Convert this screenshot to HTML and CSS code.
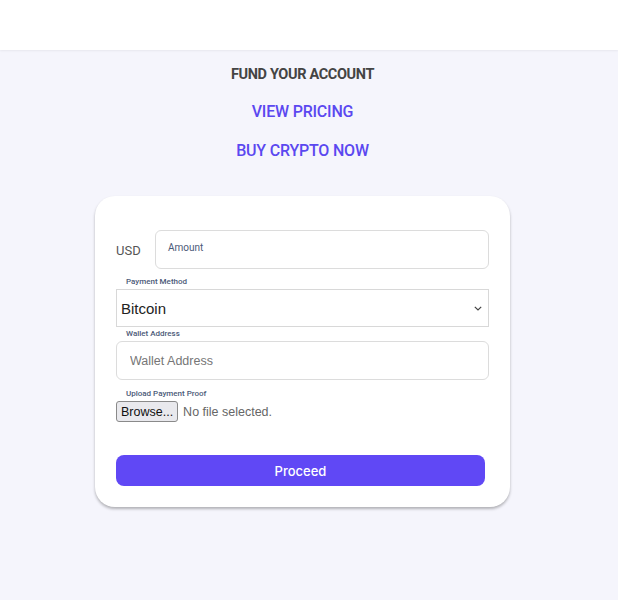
FILE: index.html
```html
<!DOCTYPE html>
<html>
<head>
<meta charset="utf-8">
<link rel="stylesheet" href="styles.css">
</head>
<body>
<header class="topbar"></header>
<main class="page">
  <h1 class="title">FUND YOUR ACCOUNT</h1>
  <a class="link link-first" href="#">VIEW PRICING</a>
  <a class="link" href="#">BUY CRYPTO NOW</a>
  <form class="card">
    <div class="amount-row">
      <span class="currency">USD</span>
      <div class="float-field">
        <input class="field amount-input" type="text">
        <label class="float-label">Amount</label>
      </div>
    </div>
    <label class="small-label pay-label">Payment Method</label>
    <div class="select-wrap">
      <select class="select">
        <option>Bitcoin</option>
      </select>
      <svg class="chevron" width="8" height="5" viewBox="0 0 8 5"><path d="M0.8 0.8l3.2 3.2 3.2-3.2" fill="none" stroke="#444" stroke-width="1.2"/></svg>
    </div>
    <label class="small-label wallet-label">Wallet Address</label>
    <input class="field wallet-input" type="text" placeholder="Wallet Address">
    <label class="small-label upload-label">Upload Payment Proof</label>
    <div class="file-row">
      <button type="button" class="browse">Browse...</button>
      <span class="no-file">No file selected.</span>
    </div>
    <button type="button" class="proceed">Proceed</button>
  </form>
</main>
</body>
</html>
```
FILE: styles.css
```css
html, body {
  margin: 0;
  padding: 0;
}
body {
  background: #f5f5fc;
  font-family: Roboto, "Liberation Sans", sans-serif;
  width: 618px;
  height: 600px;
  overflow: hidden;
}
.topbar {
  height: 50px;
  background: #fff;
  box-shadow: 0 1px 2px rgba(0, 0, 0, 0.06);
}
.page {
  width: 605px;
  display: flex;
  flex-direction: column;
  align-items: center;
}
.title {
  margin: 15px 0 0;
  font-size: 14.5px;
  line-height: 20px;
  font-weight: 700;
  color: #444;
  letter-spacing: -0.35px;
}
.link {
  display: block;
  font-size: 16px;
  line-height: 24px;
  font-weight: 500;
  color: #5b48f0;
  text-decoration: none;
  margin-top: 15px;
  letter-spacing: -0.2px;
}
.link-first {
  margin-top: 15px;
}
.card {
  margin-top: 33px;
  width: 415px;
  box-sizing: border-box;
  padding: 34px 21px 21px;
  background: #fff;
  border-radius: 20px;
  box-shadow: 0 2px 3px rgba(0, 0, 0, 0.28);
  display: flex;
  flex-direction: column;
}
.amount-row {
  display: flex;
  align-items: center;
}
.currency {
  width: 39px;
  font-size: 13px;
  color: #555;
  padding-top: 1px;
}
.float-field {
  position: relative;
  flex: 1;
}
.field {
  display: block;
  width: 100%;
  box-sizing: border-box;
  height: 39px;
  border: 1px solid #dcdcdc;
  border-radius: 6px;
  background: #fff;
  font-family: "Liberation Sans", sans-serif;
  font-size: 12.5px;
  padding: 0 13px;
  outline: none;
}
.float-label {
  position: absolute;
  left: 13px;
  top: 12px;
  font-size: 10px;
  color: #4b5a78;
}
.small-label {
  display: block;
  font-size: 8px;
  line-height: 10px;
  font-weight: 500;
  color: #4b5a78;
  padding-left: 10px;
  margin-bottom: 2px;
}
.pay-label {
  margin-top: 8px;
}
.wallet-label {
  margin-top: 2px;
}
.upload-label {
  margin-top: 9px;
}
.select-wrap {
  position: relative;
}
.select {
  display: block;
  width: 100%;
  height: 38px;
  box-sizing: border-box;
  appearance: none;
  -webkit-appearance: none;
  border: 1px solid #d8d8d8;
  border-radius: 0;
  background: #fff;
  font-family: "Liberation Sans", sans-serif;
  font-size: 15px;
  color: #222;
  padding: 0 4px;
  outline: none;
}
.chevron {
  position: absolute;
  right: 7px;
  top: 17px;
}
.wallet-input::placeholder {
  color: #767676;
}
.file-row {
  display: flex;
  align-items: center;
  gap: 5px;
}
.browse {
  height: 21px;
  padding: 0 4px;
  border: 1px solid #8a8a8a;
  border-radius: 3px;
  background: #e9e9ed;
  font-family: "Liberation Sans", sans-serif;
  font-size: 12.5px;
  color: #111;
}
.no-file {
  font-family: "Liberation Sans", sans-serif;
  font-size: 12.5px;
  color: #666;
}
.proceed {
  margin-top: 33px;
  width: 369px;
  height: 31px;
  border: none;
  border-radius: 8px;
  background: #6048f5;
  color: #fff;
  font-family: Inter, sans-serif;
  font-size: 13px;
  font-weight: 500;
}
```
